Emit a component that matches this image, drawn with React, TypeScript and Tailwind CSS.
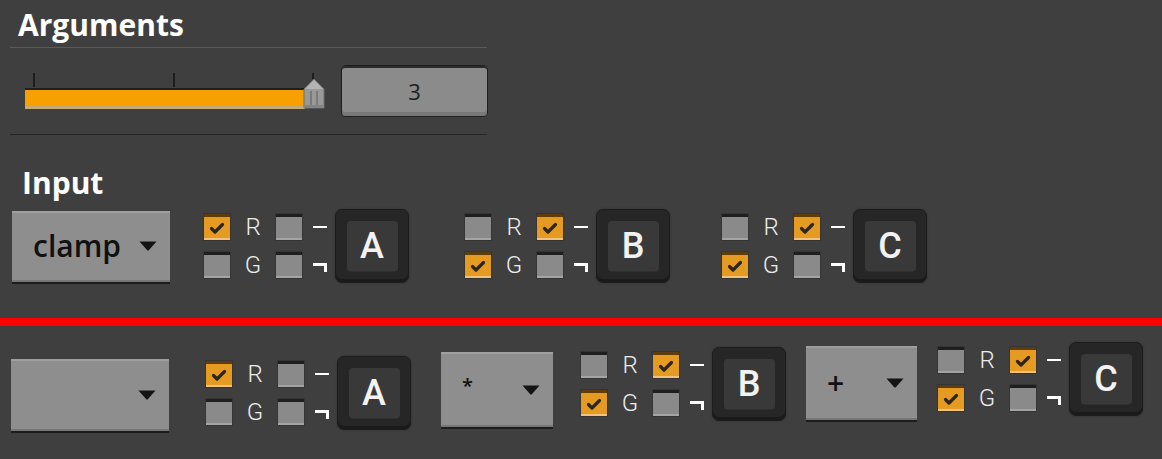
import clsx from 'clsx'

const FONT = { fontFamily: '"Open Sans", "Noto Sans", sans-serif' }

function Check({ on }: { on: boolean }) {
    return (
        <div
            className={clsx(
                'w-[26px] h-[26px] flex items-center justify-center ring-1 ring-[#353535]',
                on
                    ? 'bg-[#e59a22] shadow-[inset_0_3px_0_#5e3c0c,inset_0_-2px_0_#f1c27e]'
                    : 'bg-[#8a8a8a] shadow-[inset_0_3px_0_#1e1e1e,inset_0_-2px_0_#a4a4a4]'
            )}
        >
            {on && (
                <svg width="16" height="13" viewBox="0 0 16 13" className="mt-[3px]">
                    <path d="M2.5 6.5 L6 10 L13.5 2.5" fill="none" stroke="#2b2622" strokeWidth="3.2" strokeLinecap="round" strokeLinejoin="round" />
                </svg>
            )}
        </div>
    )
}

function Label({ children }: { children: string }) {
    return (
        <div className="flex items-center justify-center text-[24px] leading-none font-light text-[#ececec]" style={{ fontFamily: 'Roboto, sans-serif' }}>
            {children}
        </div>
    )
}

function Group({ checks, letter, className }: { checks: boolean[]; letter: string; className?: string }) {
    return (
        <div className={clsx('flex items-center', className)}>
            <div className="grid grid-cols-[26px_46px_26px_25px] gap-y-[12px]">
                <Check on={checks[0]} />
                <Label>R</Label>
                <Check on={checks[1]} />
                <div className="flex items-center pl-[11px]">
                    <div className="w-[14px] h-[2px] bg-white" />
                </div>
                <Check on={checks[2]} />
                <Label>G</Label>
                <Check on={checks[3]} />
                <div className="flex items-center pl-[11px]">
                    <div className="w-[14px] h-[9px] border-t-[3px] border-r-[3px] border-white mt-[4px]" />
                </div>
            </div>
            <div className="ml-[8px] w-[74px] h-[74px] rounded-[7px] bg-[#262626] border border-[#1c1c1c] shadow-[inset_0_-3px_0_#1a1a1a,0_0_2px_#2e2e2e] flex items-center justify-center">
                <div
                    className="w-[51px] h-[50px] rounded-[4px] bg-[#3a3939] shadow-[0_1px_0_#2f2f2f] flex items-center justify-center text-[36px] leading-none font-medium text-[#f2f2f2] pb-[1px]"
                    style={{ fontFamily: 'Roboto, sans-serif' }}
                >
                    {letter}
                </div>
            </div>
        </div>
    )
}

function Dropdown({ w, h, label, textClass, className }: { w: number; h: number; label?: string; textClass?: string; className?: string }) {
    return (
        <div
            className={clsx(
                'flex items-center justify-between pl-[21px] pr-[13px] bg-[#8e8e8e] shadow-[inset_0_2px_0_#9f9f9f,inset_0_-2px_0_#767676,0_2px_0_#1c1c1c]',
                className
            )}
            style={{ width: w, height: h }}
        >
            <span className={clsx('text-[#111] leading-none', textClass)}>{label}</span>
            <svg width="18" height="10" viewBox="0 0 18 10">
                <path d="M0.5 0.5 H17.5 L10 9 Q9 10 8 9 Z" fill="#141414" />
            </svg>
        </div>
    )
}

function Slider() {
    return (
        <div className="relative ml-[15px] w-[300px] h-[36px]">
            <div className="absolute left-[8px] top-0 w-[2px] h-[14px] bg-[#1d1d1d]" />
            <div className="absolute left-[148px] top-0 w-[2px] h-[14px] bg-[#1d1d1d]" />
            <div className="absolute left-[287px] top-0 w-[2px] h-[6px] bg-[#1d1d1d]" />
            <div className="absolute left-0 top-[15px] w-[280px] h-[21px] bg-[#f7a000] shadow-[inset_0_2px_0_#1f1f1f,inset_0_-3px_0_#c9a878]" />
            <svg width="22" height="31" viewBox="0 0 22 31" className="absolute left-[278px] top-[5px]">
                <path d="M1 11 L11 1 L21 11 V30 H1 Z" fill="#999" stroke="#6e6e6e" strokeWidth="1" />
                <path d="M2 11 L11 2 L20 11 Z" fill="#b4b4b4" />
                <rect x="7" y="13" width="2" height="15" fill="#7a7a7a" />
                <rect x="13" y="13" width="2" height="15" fill="#7a7a7a" />
                <rect x="1" y="27" width="20" height="3" fill="#848484" />
            </svg>
        </div>
    )
}

export default function App() {
    return (
        <div className="w-[1162px] h-[459px] bg-[#3f3f3f] overflow-hidden flex flex-col" style={FONT}>
            <div className="pl-[18px] pt-[10px] h-[38px] text-[30px] leading-none font-bold text-white">Arguments</div>
            <div className="mt-[9px] ml-[10px] w-[477px] h-px bg-[#5a5a5a]" />
            <div className="ml-[10px] w-[478px] h-[86px] flex items-center">
                <Slider />
                <div className="ml-[16px] w-[147px] h-[52px] rounded-[4px] bg-[#8b8b8b] border border-[#1f1f1f] shadow-[inset_0_2px_0_#2a2a2a,inset_0_-4px_0_#787878] flex items-center justify-center text-[22px] leading-none text-[#1e1e1e]">
                    3
                </div>
            </div>
            <div className="ml-[10px] w-[477px] h-px bg-[#262626]" />
            <div className="mt-[33px] pl-[22px] h-[28px] text-[30px] leading-none font-bold text-white">Input</div>
            <div className="mt-[13px] pl-[12px] h-[74px] flex items-center">
                <Dropdown w={158} h={71} label="clamp" textClass="text-[30px] font-semibold" />
                <Group className="ml-[34px]" checks={[true, false, false, false]} letter="A" />
                <Group className="ml-[56px]" checks={[false, true, true, false]} letter="B" />
                <Group className="ml-[52px]" checks={[false, true, true, false]} letter="C" />
            </div>
            <div className="mt-[35px] h-[8px] bg-[#ff0000]" />
            <div className="pl-[11px] flex items-start">
                <Dropdown className="mt-[33px]" w={158} h={72} />
                <Group className="ml-[37px] mt-[30px]" checks={[true, false, false, false]} letter="A" />
                <Dropdown className="ml-[30px] mt-[26px]" w={112} h={75} label="*" textClass="text-[20px] font-semibold -mt-[8px]" />
                <Group className="ml-[28px] mt-[21px]" checks={[false, true, true, false]} letter="B" />
                <Dropdown className="ml-[20px] mt-[20px]" w={111} h={74} label="+" textClass="text-[30px] font-semibold" />
                <Group className="ml-[21px] mt-[16px]" checks={[false, true, true, false]} letter="C" />
            </div>
        </div>
    )
}
